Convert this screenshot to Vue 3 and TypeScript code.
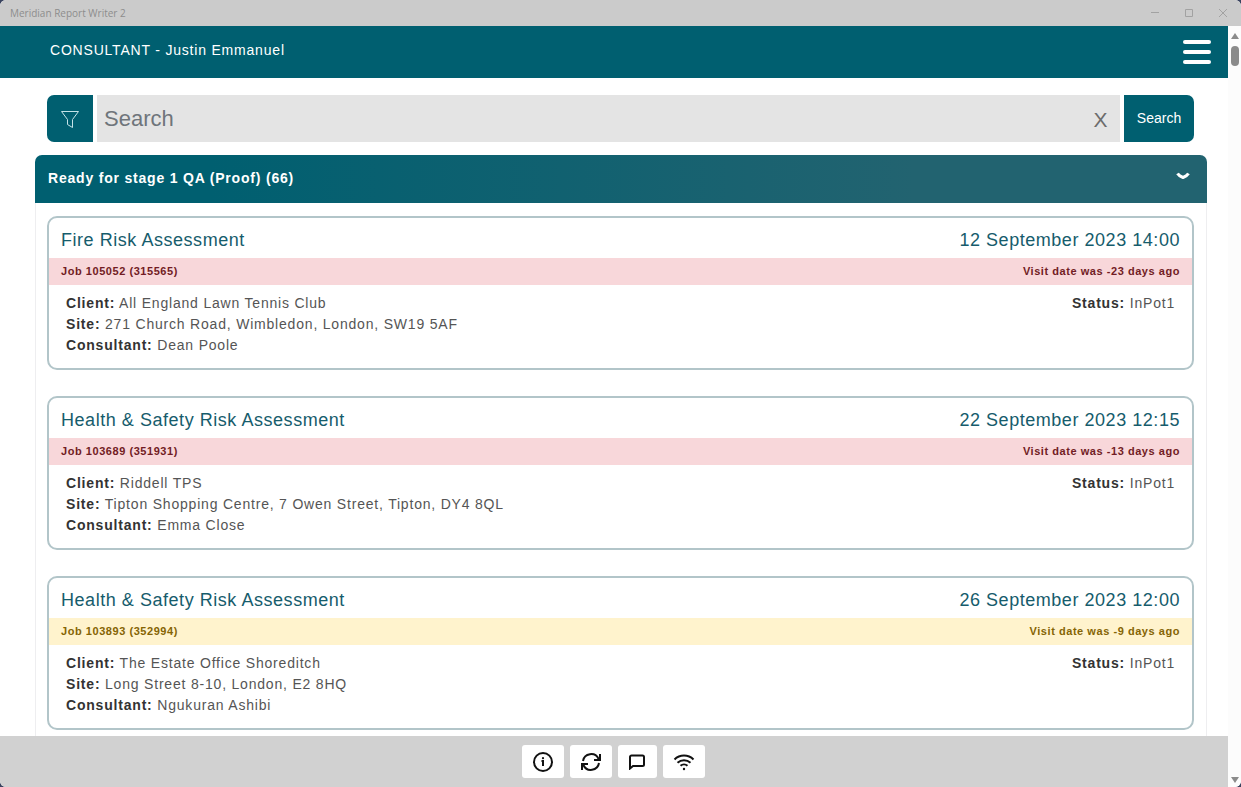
<script setup lang="ts">
import { ref } from 'vue'

interface Job {
  title: string
  date: string
  job: string
  visit: string
  level: 'danger' | 'warning'
  client: string
  site: string
  consultant: string
  status: string
}

const query = ref('')
const open = ref(true)

const jobs: Job[] = [
  {
    title: 'Fire Risk Assessment',
    date: '12 September 2023 14:00',
    job: 'Job 105052 (315565)',
    visit: 'Visit date was -23 days ago',
    level: 'danger',
    client: 'All England Lawn Tennis Club',
    site: '271 Church Road, Wimbledon, London, SW19 5AF',
    consultant: 'Dean Poole',
    status: 'InPot1',
  },
  {
    title: 'Health & Safety Risk Assessment',
    date: '22 September 2023 12:15',
    job: 'Job 103689 (351931)',
    visit: 'Visit date was -13 days ago',
    level: 'danger',
    client: 'Riddell TPS',
    site: 'Tipton Shopping Centre, 7 Owen Street, Tipton, DY4 8QL',
    consultant: 'Emma Close',
    status: 'InPot1',
  },
  {
    title: 'Health & Safety Risk Assessment',
    date: '26 September 2023 12:00',
    job: 'Job 103893 (352994)',
    visit: 'Visit date was -9 days ago',
    level: 'warning',
    client: 'The Estate Office Shoreditch',
    site: 'Long Street 8-10, London, E2 8HQ',
    consultant: 'Ngukuran Ashibi',
    status: 'InPot1',
  },
]
</script>

<template>
  <div class="desktop">
    <div class="window">
      <div class="titlebar">
        <span class="app-name">Meridian Report Writer 2</span>
        <div class="controls">
          <button type="button" aria-label="Minimize">
            <svg width="10" height="10" viewBox="0 0 10 10"><path d="M1 4.500h8" /></svg>
          </button>
          <button type="button" aria-label="Maximize">
            <svg width="10" height="10" viewBox="0 0 10 10"><path d="M1.500 1.500h7v7h-7z" /></svg>
          </button>
          <button type="button" aria-label="Close">
            <svg width="10" height="10" viewBox="0 0 10 10"><path d="M1 1l8 8M9 1l-8 8" /></svg>
          </button>
        </div>
      </div>

      <div class="body">
        <div class="page">
          <header class="topbar">
            <span>CONSULTANT - Justin Emmanuel</span>
            <button type="button" class="menu" aria-label="Menu">
              <i></i><i></i><i></i>
            </button>
          </header>

          <main class="content">
            <form class="search" role="search" @submit.prevent>
              <button type="button" class="filter" aria-label="Filter">
                <svg width="20" height="20" viewBox="0 0 20 20">
                  <path d="M1.500 2.500h17L12.500 10.500v8l-5-3v-5z" />
                </svg>
              </button>
              <div class="field">
                <input v-model="query" type="text" placeholder="Search" aria-label="Search" />
                <button type="button" class="clear" aria-label="Clear search" @click="query = ''">X</button>
              </div>
              <button type="submit" class="submit">Search</button>
            </form>

            <section class="group">
              <button type="button" class="group-head" :aria-expanded="open" @click="open = !open">
                <span>Ready for stage 1 QA (Proof) (66)</span>
                <svg width="14" height="10" viewBox="0 0 14 10"><path d="M1.500 2.500Q3 5 7 6.500Q11 5 12.500 2.500" /></svg>
              </button>
              <div v-if="open" class="cards">
                <article v-for="item in jobs" :key="item.job" class="card">
                  <div class="card-title">
                    <h2>{{ item.title }}</h2>
                    <time>{{ item.date }}</time>
                  </div>
                  <div class="strip" :class="item.level">
                    <span>{{ item.job }}</span>
                    <span>{{ item.visit }}</span>
                  </div>
                  <div class="details">
                    <div>
                      <p><b>Client:</b> {{ item.client }}</p>
                      <p><b>Site:</b> {{ item.site }}</p>
                      <p><b>Consultant:</b> {{ item.consultant }}</p>
                    </div>
                    <p><b>Status:</b> {{ item.status }}</p>
                  </div>
                </article>
              </div>
            </section>
          </main>

          <footer class="toolbar">
            <button type="button" aria-label="Information">
              <svg width="20" height="20" viewBox="0 0 20 20">
                <circle cx="10" cy="10" r="9" />
                <path d="M8.500 9h1.500v5" />
                <circle cx="10" cy="6.200" r="1.100" class="solid" />
              </svg>
            </button>
            <button type="button" aria-label="Refresh">
              <svg width="22" height="20" viewBox="0 0 22 20">
                <path d="M3 9A8.200 8.200 0 0 1 18.500 6.800L20 8M20 2v6h-6M19 11A8.200 8.200 0 0 1 3.500 13.200L2 12M2 18v-6h6" />
              </svg>
            </button>
            <button type="button" class="small" aria-label="Messages">
              <svg width="16" height="16" viewBox="0 0 16 16">
                <path d="M2.500 1.500h11a1.500 1.500 0 0 1 1.500 1.500v7.500a1.500 1.500 0 0 1-1.500 1.500h-9.500l-3 2.500v-11.500a1.500 1.500 0 0 1 1.500-1.500z" />
              </svg>
            </button>
            <button type="button" aria-label="Connection">
              <svg width="22" height="18" viewBox="0 0 22 18">
                <path d="M1.500 6.500a13.500 13.500 0 0 1 19 0M4.500 9.700a9.500 9.500 0 0 1 13 0M7.500 12.800a5.200 5.200 0 0 1 7 0" />
                <circle cx="11" cy="16" r="1.200" class="solid" />
              </svg>
            </button>
          </footer>
        </div>

        <div class="scrollbar" aria-hidden="true">
          <svg width="8" height="6" viewBox="0 0 8 6"><path d="M4 0l4 6H0z" /></svg>
          <div class="thumb"></div>
          <svg width="8" height="6" viewBox="0 0 8 6"><path d="M4 6l4-6H0z" /></svg>
        </div>
      </div>
    </div>
  </div>
</template>

<style>
body {
  margin: 0;
}
</style>

<style scoped>
* {
  box-sizing: border-box;
}
button {
  border: 0;
  padding: 0;
  font: inherit;
  letter-spacing: inherit;
  color: inherit;
  background: none;
  display: flex;
  align-items: center;
  justify-content: center;
  cursor: pointer;
}
svg {
  display: block;
  fill: none;
  stroke: currentColor;
}
.desktop {
  height: 100vh;
  background: #39435f;
  font-family: 'Liberation Sans', Arial, sans-serif;
  font-size: 16px;
  letter-spacing: 0.05em;
}
.window {
  height: 100%;
  display: flex;
  flex-direction: column;
  border-radius: 6px;
  overflow: hidden;
  background: #fff;
}
.titlebar {
  flex: none;
  height: 26px;
  padding: 0 8px 0 10px;
  display: flex;
  align-items: center;
  justify-content: space-between;
  background: #cbcbcb;
  color: #8d8d8d;
  font-family: 'Open Sans', 'Noto Sans', sans-serif;
  font-size: 10px;
  letter-spacing: normal;
}
.controls {
  display: flex;
  gap: 14px;
  color: #a2a2a2;
}
.controls button {
  width: 20px;
  height: 24px;
}
.body {
  flex: 1;
  min-height: 0;
  display: flex;
}
.page {
  flex: 1;
  min-width: 0;
  display: flex;
  flex-direction: column;
}
.topbar {
  flex: none;
  height: 52px;
  padding: 0 17px 0 50px;
  display: flex;
  align-items: center;
  justify-content: space-between;
  background: #005f70;
  color: #fff;
  font-size: 14px;
}
.topbar span {
  padding-bottom: 4px;
}
.menu {
  width: 28px;
  flex-direction: column;
  gap: 6px;
}
.menu i {
  width: 28px;
  height: 4px;
  border-radius: 2px;
  background: #fff;
}
.content {
  flex: 1;
  min-height: 0;
  overflow: hidden;
  padding: 17px 21px 0 35px;
}
.search {
  display: flex;
  gap: 4px;
  height: 47px;
  margin: 0 13px 13px 12px;
}
.filter {
  width: 46px;
  border-radius: 7px 0 0 7px;
  background: #005f70;
  color: #c5e3e8;
}
.field {
  flex: 1;
  display: flex;
  background: #e4e4e4;
}
.field input {
  flex: 1;
  min-width: 0;
  border: 0;
  outline: 0;
  padding: 0 7px;
  background: none;
  font: 22px 'Liberation Sans', Arial, sans-serif;
  color: #333;
}
.field input::placeholder {
  color: #6f757b;
  opacity: 1;
}
.clear {
  width: 39px;
  padding-top: 2px;
  font-size: 21px;
  letter-spacing: normal;
  color: #6c6c6c;
}
.submit {
  width: 70px;
  padding-bottom: 2px;
  border-radius: 0 7px 7px 0;
  background: #005f70;
  color: #fff;
  font-size: 14px;
  letter-spacing: normal;
}
.group {
  border: 1px solid #eeeef0;
  border-top: 0;
  border-radius: 7px 7px 0 0;
}
.group-head {
  width: calc(100% + 2px);
  height: 48px;
  margin: 0 -1px;
  padding: 0 17px 2px 13px;
  justify-content: space-between;
  border-radius: 7px 7px 0 0;
  background: linear-gradient(90deg, #005f70 15%, #226370 75%);
  color: #fff;
  font-size: 14px;
  font-weight: bold;
}
.group-head svg {
  stroke-width: 3;
  margin-bottom: 4px;
}
.cards {
  display: flex;
  flex-direction: column;
  gap: 26px;
  padding: 13px 12px 26px 11px;
}
.card {
  border: 2px solid #b2c5c9;
  border-radius: 10px;
  padding-bottom: 12px;
}
.card-title,
.strip,
.details {
  display: flex;
  justify-content: space-between;
}
.card-title {
  align-items: center;
  height: 40px;
  padding: 4px 12px 0;
  font-size: 18px;
  letter-spacing: 0.03em;
  color: #165c6c;
}
.card-title h2 {
  margin: 0;
  font: inherit;
}
.strip {
  align-items: center;
  height: 27px;
  padding: 0 12px 2px;
  font-size: 11px;
  font-weight: bold;
  letter-spacing: 0.05em;
}
.danger {
  background: #f8d7da;
  color: #721c24;
}
.warning {
  background: #fff3cd;
  color: #856404;
}
.details {
  padding: 8px 17px 0;
  font-size: 14px;
  line-height: 21px;
  color: #555;
}
.details p {
  margin: 0;
}
.details b {
  color: #333;
}
.toolbar {
  flex: none;
  height: 51px;
  padding-right: 2px;
  display: flex;
  align-items: center;
  justify-content: center;
  gap: 6px;
  background: #d1d1d1;
  color: #111;
}
.toolbar button {
  width: 42px;
  height: 33px;
  border-radius: 3px;
  background: #fff;
}
.toolbar .small {
  width: 39px;
}
.toolbar svg {
  stroke-width: 2;
}
.toolbar .solid {
  fill: currentColor;
  stroke: none;
}
.scrollbar {
  flex: none;
  width: 13px;
  padding: 7px 0 4px;
  display: flex;
  flex-direction: column;
  align-items: center;
  background: #fcfcfc;
}
.scrollbar svg {
  fill: #8b8b8b;
  stroke: none;
}
.thumb {
  width: 8px;
  height: 20px;
  margin: 7px 0 auto;
  border-radius: 4px;
  background: #8b8b8b;
}
</style>
